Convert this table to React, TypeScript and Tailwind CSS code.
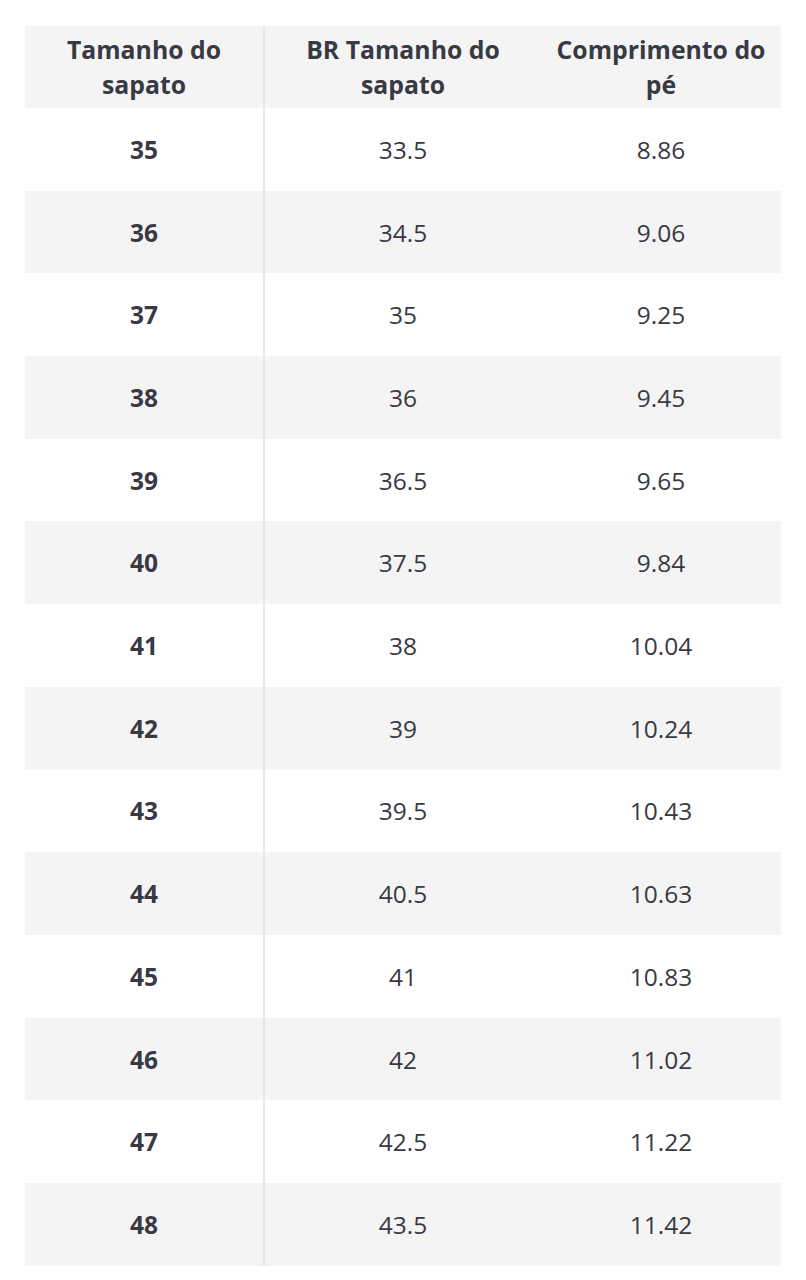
import React from "react";

const rows: [string, string, string][] = [
  ["35", "33.5", "8.86"],
  ["36", "34.5", "9.06"],
  ["37", "35", "9.25"],
  ["38", "36", "9.45"],
  ["39", "36.5", "9.65"],
  ["40", "37.5", "9.84"],
  ["41", "38", "10.04"],
  ["42", "39", "10.24"],
  ["43", "39.5", "10.43"],
  ["44", "40.5", "10.63"],
  ["45", "41", "10.83"],
  ["46", "42", "11.02"],
  ["47", "42.5", "11.22"],
  ["48", "43.5", "11.42"],
];

export default function App() {
  return (
    <div
      className="w-[806px] h-[1280px] bg-white pt-[26px] pl-[25px] text-[#383a43]"
      style={{ fontFamily: '"Open Sans", sans-serif' }}
    >
      <div className="w-[756px]">
        <div className="grid grid-cols-[240px_276px_240px] h-[82px] bg-[#f4f4f4] text-[24.8px] font-bold leading-[35px] text-center">
          <div className="flex items-center justify-center border-r-2 border-[#e6e6e6]">
            Tamanho do<br />sapato
          </div>
          <div className="flex items-center justify-center">
            BR Tamanho do<br />sapato
          </div>
          <div className="flex items-center justify-center">
            Comprimento do<br />pé
          </div>
        </div>
        {rows.map((r, i) => (
          <div
            key={r[0]}
            className={`grid grid-cols-[240px_276px_240px] h-[82.7px] text-[24.5px] text-center ${
              i % 2 === 1 ? "bg-[#f4f4f4]" : "bg-white"
            }`}
          >
            <div className="flex items-center justify-center border-r-2 border-[#e6e6e6] font-bold pt-[2px]">
              {r[0]}
            </div>
            <div className="flex items-center justify-center pt-[2px]">{r[1]}</div>
            <div className="flex items-center justify-center pt-[2px]">{r[2]}</div>
          </div>
        ))}
      </div>
    </div>
  );
}
